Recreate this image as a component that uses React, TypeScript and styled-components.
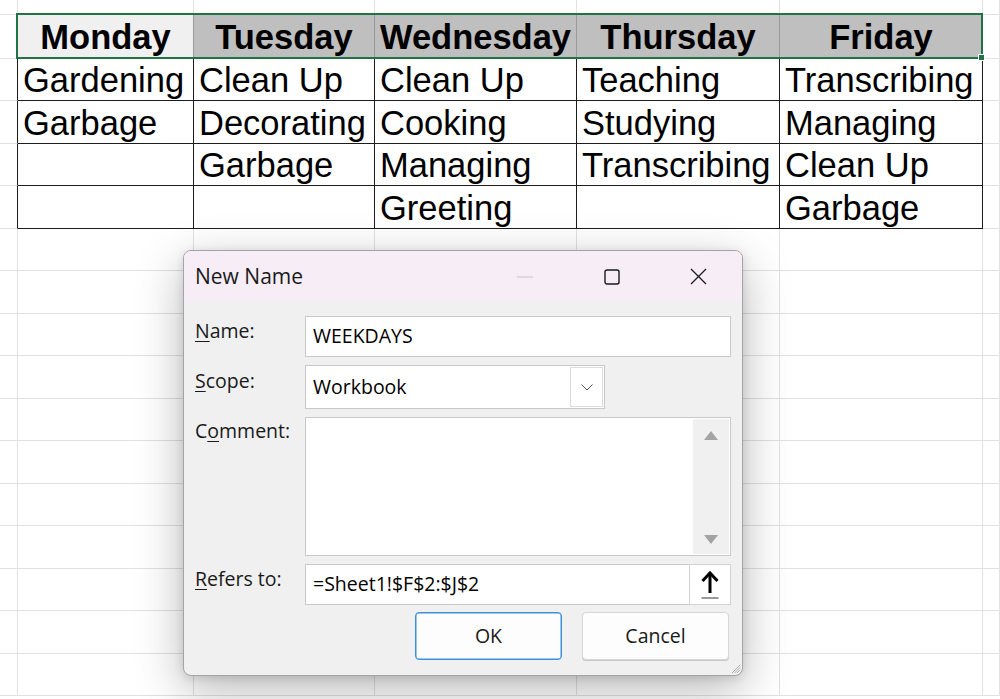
import React from "react";
import styled, { createGlobalStyle } from "styled-components";

const GlobalStyle = createGlobalStyle`
  html, body {
    margin: 0;
    padding: 0;
    background: #ffffff;
    overflow: hidden;
  }
`;

const COLS = [18, 176, 181, 202, 203, 203, 17];
const ROWS = [15, 44, 42, 43, 42, 43, 42, 43, 42, 43, 42, 43, 42, 43, 42, 43, 42];

const headers = ["Monday", "Tuesday", "Wednesday", "Thursday", "Friday"];
const tasks = [
  ["Gardening", "Clean Up", "Clean Up", "Teaching", "Transcribing"],
  ["Garbage", "Decorating", "Cooking", "Studying", "Managing"],
  ["", "Garbage", "Managing", "Transcribing", "Clean Up"],
  ["", "", "Greeting", "", "Garbage"],
];

const GRID = "#e1e1e1";
const INK = "#1c1c1c";

const Page = styled.div`
  position: relative;
  width: 1000px;
  height: 699px;
  overflow: hidden;
  background: #fff;
`;

const Sheet = styled.div`
  display: grid;
  grid-template-columns: ${COLS.map((c) => c + "px").join(" ")};
  grid-template-rows: ${ROWS.map((r) => r + "px").join(" ")};
`;

const Cell = styled.div<{
  $right: string;
  $bottom: string;
  $bg?: string;
  $head?: boolean;
}>`
  box-sizing: border-box;
  display: flex;
  align-items: center;
  justify-content: ${(p) => (p.$head ? "center" : "flex-start")};
  padding-left: ${(p) => (p.$head ? "0" : "5px")};
  border-right: 1px solid ${(p) => p.$right};
  border-bottom: 1px solid ${(p) => p.$bottom};
  background: ${(p) => p.$bg || "transparent"};
  font-family: "Liberation Sans", Arial, sans-serif;
  font-size: 34.5px;
  font-weight: ${(p) => (p.$head ? 700 : 400)};
  color: #000;
  white-space: nowrap;
  line-height: 1;
  padding-top: 2px;
`;

const Selection = styled.div`
  position: absolute;
  left: 16px;
  top: 13px;
  width: 967px;
  height: 46px;
  box-sizing: border-box;
  border: 2px solid #217346;
  pointer-events: none;
`;

const FillHandle = styled.div`
  position: absolute;
  left: 978px;
  top: 54px;
  width: 7px;
  height: 7px;
  background: #217346;
  border: 1px solid #fff;
  box-sizing: border-box;
`;

const Window = styled.div`
  position: absolute;
  left: 183px;
  top: 250px;
  width: 560px;
  height: 426px;
  box-sizing: border-box;
  border: 1px solid #a4a4a4;
  border-radius: 8px;
  background: #f0f0f0;
  overflow: hidden;
  display: flex;
  flex-direction: column;
  box-shadow: 0 14px 48px rgba(0, 0, 0, 0.28), 0 2px 10px rgba(0, 0, 0, 0.12);
  font-family: "Open Sans", "Noto Sans", sans-serif;
  font-size: 19.5px;
  color: #1a1a1a;
`;

const TitleBar = styled.div`
  height: 51px;
  flex: none;
  display: flex;
  align-items: center;
  background: #f6edf6;
  padding-left: 11px;
`;

const Title = styled.div`
  flex: 1;
  font-size: 21px;
  padding-bottom: 2px;
`;

const Caption = styled.div`
  width: 87px;
  height: 51px;
  display: flex;
  align-items: center;
  justify-content: center;
`;

const Body = styled.div`
  flex: 1;
  display: flex;
  flex-direction: column;
  gap: 8px;
  padding: 14px 11px 15px 11px;
`;

const Field = styled.div`
  display: grid;
  grid-template-columns: 110px 1fr;
  align-items: start;
`;

const Label = styled.div<{ $drop?: number }>`
  padding-top: ${(p) => p.$drop ?? 2}px;
  line-height: 26px;
  u {
    text-decoration-thickness: 1px;
    text-underline-offset: 3px;
  }
`;

const Box = styled.div<{ $h: number; $w?: number }>`
  box-sizing: border-box;
  height: ${(p) => p.$h}px;
  width: ${(p) => (p.$w ? p.$w + "px" : "auto")};
  background: #fff;
  border: 1px solid #c9c9c9;
  display: flex;
  align-items: center;
  position: relative;
`;

const Value = styled.span`
  flex: 1;
  padding-left: 7px;
  color: #000;
  padding-bottom: 2px;
`;

const DropButton = styled.div`
  box-sizing: border-box;
  width: 33px;
  height: 40px;
  margin-right: 1px;
  background: #fff;
  border: 1px solid #dddddd;
  display: flex;
  align-items: center;
  justify-content: center;
`;

const ScrollBar = styled.div`
  position: absolute;
  right: 1px;
  top: 1px;
  bottom: 1px;
  width: 36px;
  background: #f0f0f0;
  display: flex;
  flex-direction: column;
  justify-content: space-between;
  align-items: center;
  padding: 12px 0 10px;
  box-sizing: border-box;
`;

const CollapseButton = styled.div`
  box-sizing: border-box;
  width: 42px;
  height: 41px;
  margin: -1px -1px -1px 0;
  background: #fff;
  border: 1px solid #d3d3d3;
  display: flex;
  align-items: center;
  justify-content: center;
`;

const Actions = styled.div`
  display: flex;
  justify-content: flex-end;
  gap: 20px;
  padding-right: 2px;
  margin-top: -1px;
`;

const Button = styled.div<{ $primary?: boolean }>`
  box-sizing: border-box;
  width: 147px;
  height: 48px;
  border-radius: 4px;
  background: #fdfdfd;
  border: 1px solid ${(p) => (p.$primary ? "#3c8fd9" : "#d6d6d6")};
  box-shadow: ${(p) => (p.$primary ? "inset 0 0 0 0.5px #3c8fd9" : "0 1px 0 #c8c8c8")};
  display: flex;
  align-items: center;
  justify-content: center;
  color: #1a1a1a;
  padding-bottom: 2px;
`;

const Grip = styled.svg`
  position: absolute;
  right: 1px;
  bottom: 1px;
`;

function cellLines(r: number, c: number) {
  const inTableRow = r >= 1 && r <= 5;
  const inTableCol = c >= 1 && c <= 5;
  let right = GRID;
  let bottom = GRID;
  if (inTableRow && c >= 0 && c <= 5) right = INK;
  if (r === 1 && c >= 1 && c <= 4) right = "#9a9a9a";
  if (inTableCol && r >= 0 && r <= 5) bottom = INK;
  return { right, bottom };
}

function SheetGrid() {
  const cells: React.ReactNode[] = [];
  ROWS.forEach((_, r) => {
    COLS.forEach((__, c) => {
      const { right, bottom } = cellLines(r, c);
      let text = "";
      let bg: string | undefined;
      const head = r === 1 && c >= 1 && c <= 5;
      if (head) {
        text = headers[c - 1];
        bg = c === 1 ? "#f0f0f0" : "#bfbfbf";
      } else if (r >= 2 && r <= 5 && c >= 1 && c <= 5) {
        text = tasks[r - 2][c - 1];
      }
      cells.push(
        <Cell key={`${r}-${c}`} $right={right} $bottom={bottom} $bg={bg} $head={head}>
          {text}
        </Cell>
      );
    });
  });
  return <Sheet>{cells}</Sheet>;
}

export default function App() {
  return (
    <Page>
      <GlobalStyle />
      <SheetGrid />
      <Selection />
      <FillHandle />

      <Window>
        <TitleBar>
          <Title>New Name</Title>
          <Caption>
            <svg width="16" height="2" viewBox="0 0 16 2">
              <line x1="0" y1="1" x2="16" y2="1" stroke="#c4c4c4" strokeWidth="1" />
            </svg>
          </Caption>
          <Caption>
            <svg width="16" height="16" viewBox="0 0 16 16">
              <rect x="1" y="1" width="14" height="14" rx="2" fill="none" stroke="#1a1a1a" strokeWidth="1.4" />
            </svg>
          </Caption>
          <Caption>
            <svg width="17" height="17" viewBox="0 0 17 17">
              <path d="M1 1 L16 16 M16 1 L1 16" stroke="#1a1a1a" strokeWidth="1.3" />
            </svg>
          </Caption>
        </TitleBar>

        <Body>
          <Field>
            <Label>
              <u>N</u>ame:
            </Label>
            <Box $h={41}>
              <Value>WEEKDAYS</Value>
            </Box>
          </Field>

          <Field>
            <Label $drop={3}>
              <u>S</u>cope:
            </Label>
            <Box $h={44} $w={300}>
              <Value>Workbook</Value>
              <DropButton>
                <svg width="12" height="7" viewBox="0 0 12 7">
                  <path d="M0.5 0.5 L6 6 L11.5 0.5" fill="none" stroke="#555" strokeWidth="1" />
                </svg>
              </DropButton>
            </Box>
          </Field>

          <Field>
            <Label $drop={1}>
              C<u>o</u>mment:
            </Label>
            <Box $h={139}>
              <ScrollBar>
                <svg width="14" height="9" viewBox="0 0 14 9">
                  <path d="M7 0 L14 9 L0 9 Z" fill="#a3a3a3" />
                </svg>
                <svg width="14" height="9" viewBox="0 0 14 9">
                  <path d="M0 0 L14 0 L7 9 Z" fill="#a3a3a3" />
                </svg>
              </ScrollBar>
            </Box>
          </Field>

          <Field>
            <Label>
              <u>R</u>efers to:
            </Label>
            <Box $h={41}>
              <Value>=Sheet1!$F$2:$J$2</Value>
              <CollapseButton>
                <svg width="20" height="30" viewBox="0 0 20 30">
                  <path d="M10 3 L10 23" stroke="#000" strokeWidth="3" />
                  <path d="M2.5 11 L10 3 L17.5 11" fill="none" stroke="#000" strokeWidth="3" />
                  <path d="M1.5 28 L18.5 28" stroke="#777" strokeWidth="1.5" />
                </svg>
              </CollapseButton>
            </Box>
          </Field>

          <Actions>
            <Button $primary>OK</Button>
            <Button>Cancel</Button>
          </Actions>
        </Body>

        <Grip width="10" height="10" viewBox="0 0 10 10">
          <path d="M9 1 L1 9 M9 3.5 L3.5 9 M9 6 L6 9" stroke="#9a9a9a" strokeWidth="0.8" />
        </Grip>
      </Window>
    </Page>
  );
}
